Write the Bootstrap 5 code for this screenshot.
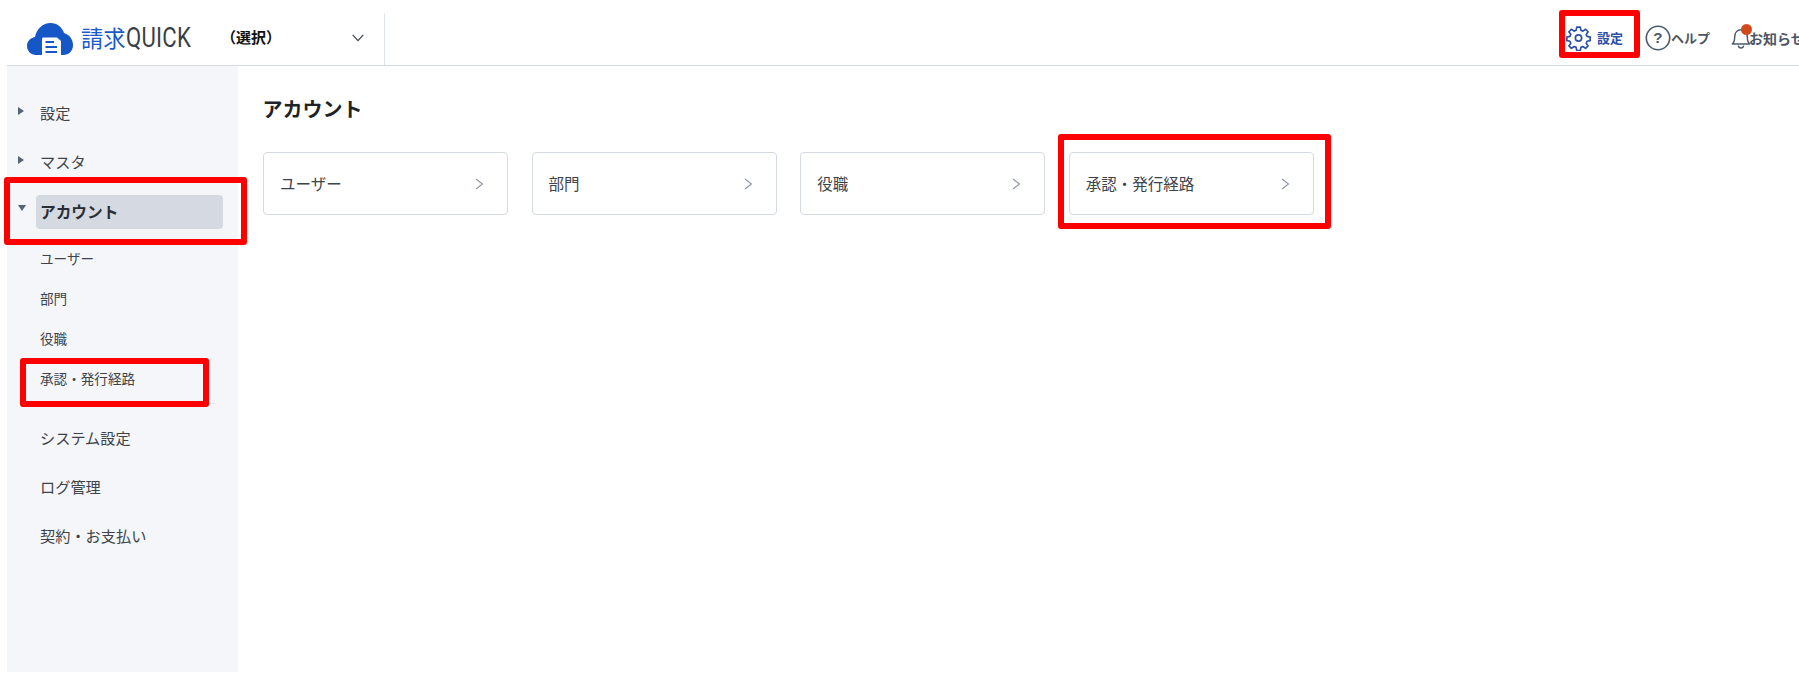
<!doctype html>
<html lang="ja">
<head>
<meta charset="utf-8">
<title>請求QUICK</title>
<link rel="stylesheet" href="https://cdn.jsdelivr.net/npm/bootstrap@5.3.0/dist/css/bootstrap.min.css">
<style>
html,body{height:100%;overflow:hidden;background:#fff}
body{font-family:"Noto Sans CJK JP","Noto Sans",sans-serif;color:#3d4349;position:relative}
.app-shell{margin-left:7px;width:1792px;height:672px}
.top-bar{height:66px;border-bottom:1px solid #d5d9e2}
.brand-area{width:378px;height:52px;margin-top:13px;border-right:1px solid #dfe3ea;padding-left:20px}
.brand-cloud{width:46px;height:32px;margin-top:10px;flex:none}
.brand-kanji{font-size:23px;color:#1a5ac8;line-height:1;margin:13px 0 0 8px;width:45px;flex:none;white-space:nowrap;transform:scaleX(.97);transform-origin:left center}
.brand-latin{font-family:Roboto,sans-serif;font-weight:400;font-size:28px;line-height:1;color:#3a3f45;margin-top:11px;transform:scaleX(.79);transform-origin:left center;width:70px;flex:none;letter-spacing:.3px}
.org-select{font-size:15px;font-weight:700;color:#111;margin:13px 0 0 25px;width:131px;line-height:1.4}
.org-chev{margin-top:21px;flex:none}
.tool-items{margin-left:auto;white-space:nowrap;font-size:13px;font-weight:700;color:#4b5563;height:52px;margin-top:13px}
.tool-one{display:flex;align-items:center;height:50px;flex:none}
.tool-one svg{flex:none}
.tool-on{color:#2c50a8;margin-right:22px;gap:6px}
.tool-help{margin-right:20px}
.tool-bell{position:relative;width:69px;overflow:hidden}
.bell-shape{margin-left:1px}
.bell-dot{position:absolute;left:11px;top:11px;width:11px;height:11px;border-radius:50%;background:#d2491c}
.bell-text{margin-left:-2px;font-size:14px}
.side-pane{width:231px;height:606px;background:#f4f6fa;padding-top:22px}
.side-row{height:49px;font-size:15.2px;color:#3d4349;padding-left:33px;position:relative}
.side-tri{position:absolute;left:10px;top:18px}
.side-active{height:34px;width:187px;margin:2px 0 0 -4px;padding-left:4px;background:#d4d9e2;border-radius:4px;font-weight:700;color:#2a2e33;font-size:15.7px}
.side-sub{padding:3px 0 0 33px;margin-bottom:4.7px;font-size:13.6px;position:relative}
.side-sub>div{height:40px}
.side-rule{height:1px;background:#e2e5ea;margin:0 23px 9px 33px}
.main-pane{padding:26px 0 0 25px}
.main-title{font-size:20px;font-weight:700;color:#1e2327;line-height:34px;margin:0 0 26px -.5px}
.tile-row{gap:23.6px}
.tile-box{width:245px;height:63px;border:1px solid #d5d9e2;border-radius:4px;padding:0 23px 0 16px;font-size:15.5px;color:#3d4349;background:#fff}
.red-note{position:absolute;border:6px solid #f00;border-radius:3px;pointer-events:none}
.note-a{left:1559px;top:10px;width:81px;height:48px}
.note-b{left:4px;top:177px;width:243px;height:68px}
.note-c{left:20px;top:358px;width:189px;height:49px}
.note-d{left:1058px;top:134px;width:273px;height:95px}
</style>
</head>
<body>
<div class="app-shell">
  <header class="top-bar d-flex">
    <div class="brand-area d-flex">
      <svg class="brand-cloud" viewBox="0 0 46 32"><path fill="#1557c6" d="M9 32C4 32 0 28 0 23 0 18.500 3 15 8 14 9.500 6 16 0 23.500 0 30 0 35 4 37 10 42 11.500 46 16 46 22 46 28 42 32 36 32Z"/><path fill="#fff" d="M15 32V16C15 15 15.800 14.500 16.500 14.500H30L34 18V32Z"/><path stroke="#1557c6" stroke-width="2" fill="none" d="M18.500 19H27M18.500 24H30M18.500 29H30"/></svg>
      <div class="brand-kanji">請求</div>
      <div class="brand-latin">QUICK</div>
      <div class="org-select">（選択）</div>
      <svg class="org-chev" width="12" height="8" viewBox="0 0 12 8"><path d="M.7.8 6 6.600 11.300.8" fill="none" stroke="#3d4349" stroke-width="1.200"/></svg>
    </div>
    <div class="tool-items d-flex">
      <div class="tool-one tool-on">
        <svg width="25" height="26" viewBox="0 0 24 24" fill="none" stroke="#2c50a8" stroke-width="1.600" stroke-linejoin="round"><circle cx="12" cy="12" r="3"/><path d="M10.300 1.500h3.400l.6 3.100 1.900.8 2.600-1.800 2.400 2.400-1.800 2.600.8 1.900 3 .6v3.400l-3 .6-.8 1.900 1.800 2.600-2.400 2.400-2.600-1.800-1.900.8-.6 3h-3.400l-.6-3-1.900-.8-2.600 1.800-2.400-2.400 1.800-2.600-.8-1.900-3-.6v-3.400l3-.6.800-1.900-1.800-2.600 2.400-2.400 2.600 1.800 1.900-.8Z"/></svg>
        <span>設定</span>
      </div>
      <div class="tool-one tool-help">
        <svg width="26" height="26" viewBox="0 0 24 24" fill="none"><circle cx="12" cy="12" r="10.800" stroke="#4b5b6b" stroke-width="1.500"/><text x="12" y="17" text-anchor="middle" font-size="14" font-weight="700" fill="#4b5b6b" font-family="Liberation Sans">?</text></svg>
        <span>ヘルプ</span>
      </div>
      <div class="tool-one tool-bell">
        <svg class="bell-shape" width="20" height="22" viewBox="0 0 22 24" fill="none" stroke="#4b5b6b" stroke-width="1.600"><path d="M1.500 18.500c2-1.500 2.500-3.500 2.500-7C4 6 7 3 11 3s7 3 7 8.500c0 3.500.5 5.500 2.500 7Z" stroke-linejoin="round"/><path d="M8 20.500c.3 1.500 1.500 2.500 3 2.500s2.700-1 3-2.500"/></svg>
        <span class="bell-dot"></span>
        <span class="bell-text">お知らせ</span>
      </div>
    </div>
  </header>
  <div class="d-flex">
    <nav class="side-pane flex-shrink-0">
      <div class="side-row d-flex align-items-center"><svg class="side-tri" width="8" height="10" viewBox="0 0 8 10"><path d="M1 1l6 4-6 4Z" fill="#51647a"/></svg>設定</div>
      <div class="side-row d-flex align-items-center"><svg class="side-tri" width="8" height="10" viewBox="0 0 8 10"><path d="M1 1l6 4-6 4Z" fill="#51647a"/></svg>マスタ</div>
      <div class="side-row d-flex align-items-center"><svg class="side-tri" width="10" height="8" viewBox="0 0 10 8"><path d="M1 1h8L5 7Z" fill="#51647a"/></svg><div class="side-active d-flex align-items-center">アカウント</div></div>
      <div class="side-sub">
        <div class="d-flex align-items-center">ユーザー</div>
        <div class="d-flex align-items-center">部門</div>
        <div class="d-flex align-items-center">役職</div>
        <div class="d-flex align-items-center">承認・発行経路</div>
      </div>
      <div class="side-rule"></div>
      <div class="side-row d-flex align-items-center">システム設定</div>
      <div class="side-row d-flex align-items-center">ログ管理</div>
      <div class="side-row d-flex align-items-center">契約・お支払い</div>
    </nav>
    <main class="main-pane flex-grow-1">
      <h1 class="main-title">アカウント</h1>
      <div class="tile-row d-flex">
        <div class="tile-box d-flex align-items-center justify-content-between"><span>ユーザー</span><svg width="9" height="12" viewBox="0 0 9 12"><path d="M1 1l6.500 5L1 11" fill="none" stroke="#8a94a3" stroke-width="1.100"/></svg></div>
        <div class="tile-box d-flex align-items-center justify-content-between"><span>部門</span><svg width="9" height="12" viewBox="0 0 9 12"><path d="M1 1l6.500 5L1 11" fill="none" stroke="#8a94a3" stroke-width="1.100"/></svg></div>
        <div class="tile-box d-flex align-items-center justify-content-between"><span>役職</span><svg width="9" height="12" viewBox="0 0 9 12"><path d="M1 1l6.500 5L1 11" fill="none" stroke="#8a94a3" stroke-width="1.100"/></svg></div>
        <div class="tile-box d-flex align-items-center justify-content-between"><span>承認・発行経路</span><svg width="9" height="12" viewBox="0 0 9 12"><path d="M1 1l6.500 5L1 11" fill="none" stroke="#8a94a3" stroke-width="1.100"/></svg></div>
      </div>
    </main>
  </div>
</div>
<div class="red-note note-a"></div>
<div class="red-note note-b"></div>
<div class="red-note note-c"></div>
<div class="red-note note-d"></div>
<script src="https://cdn.jsdelivr.net/npm/bootstrap@5.3.0/dist/js/bootstrap.bundle.min.js"></script>
</body>
</html>
